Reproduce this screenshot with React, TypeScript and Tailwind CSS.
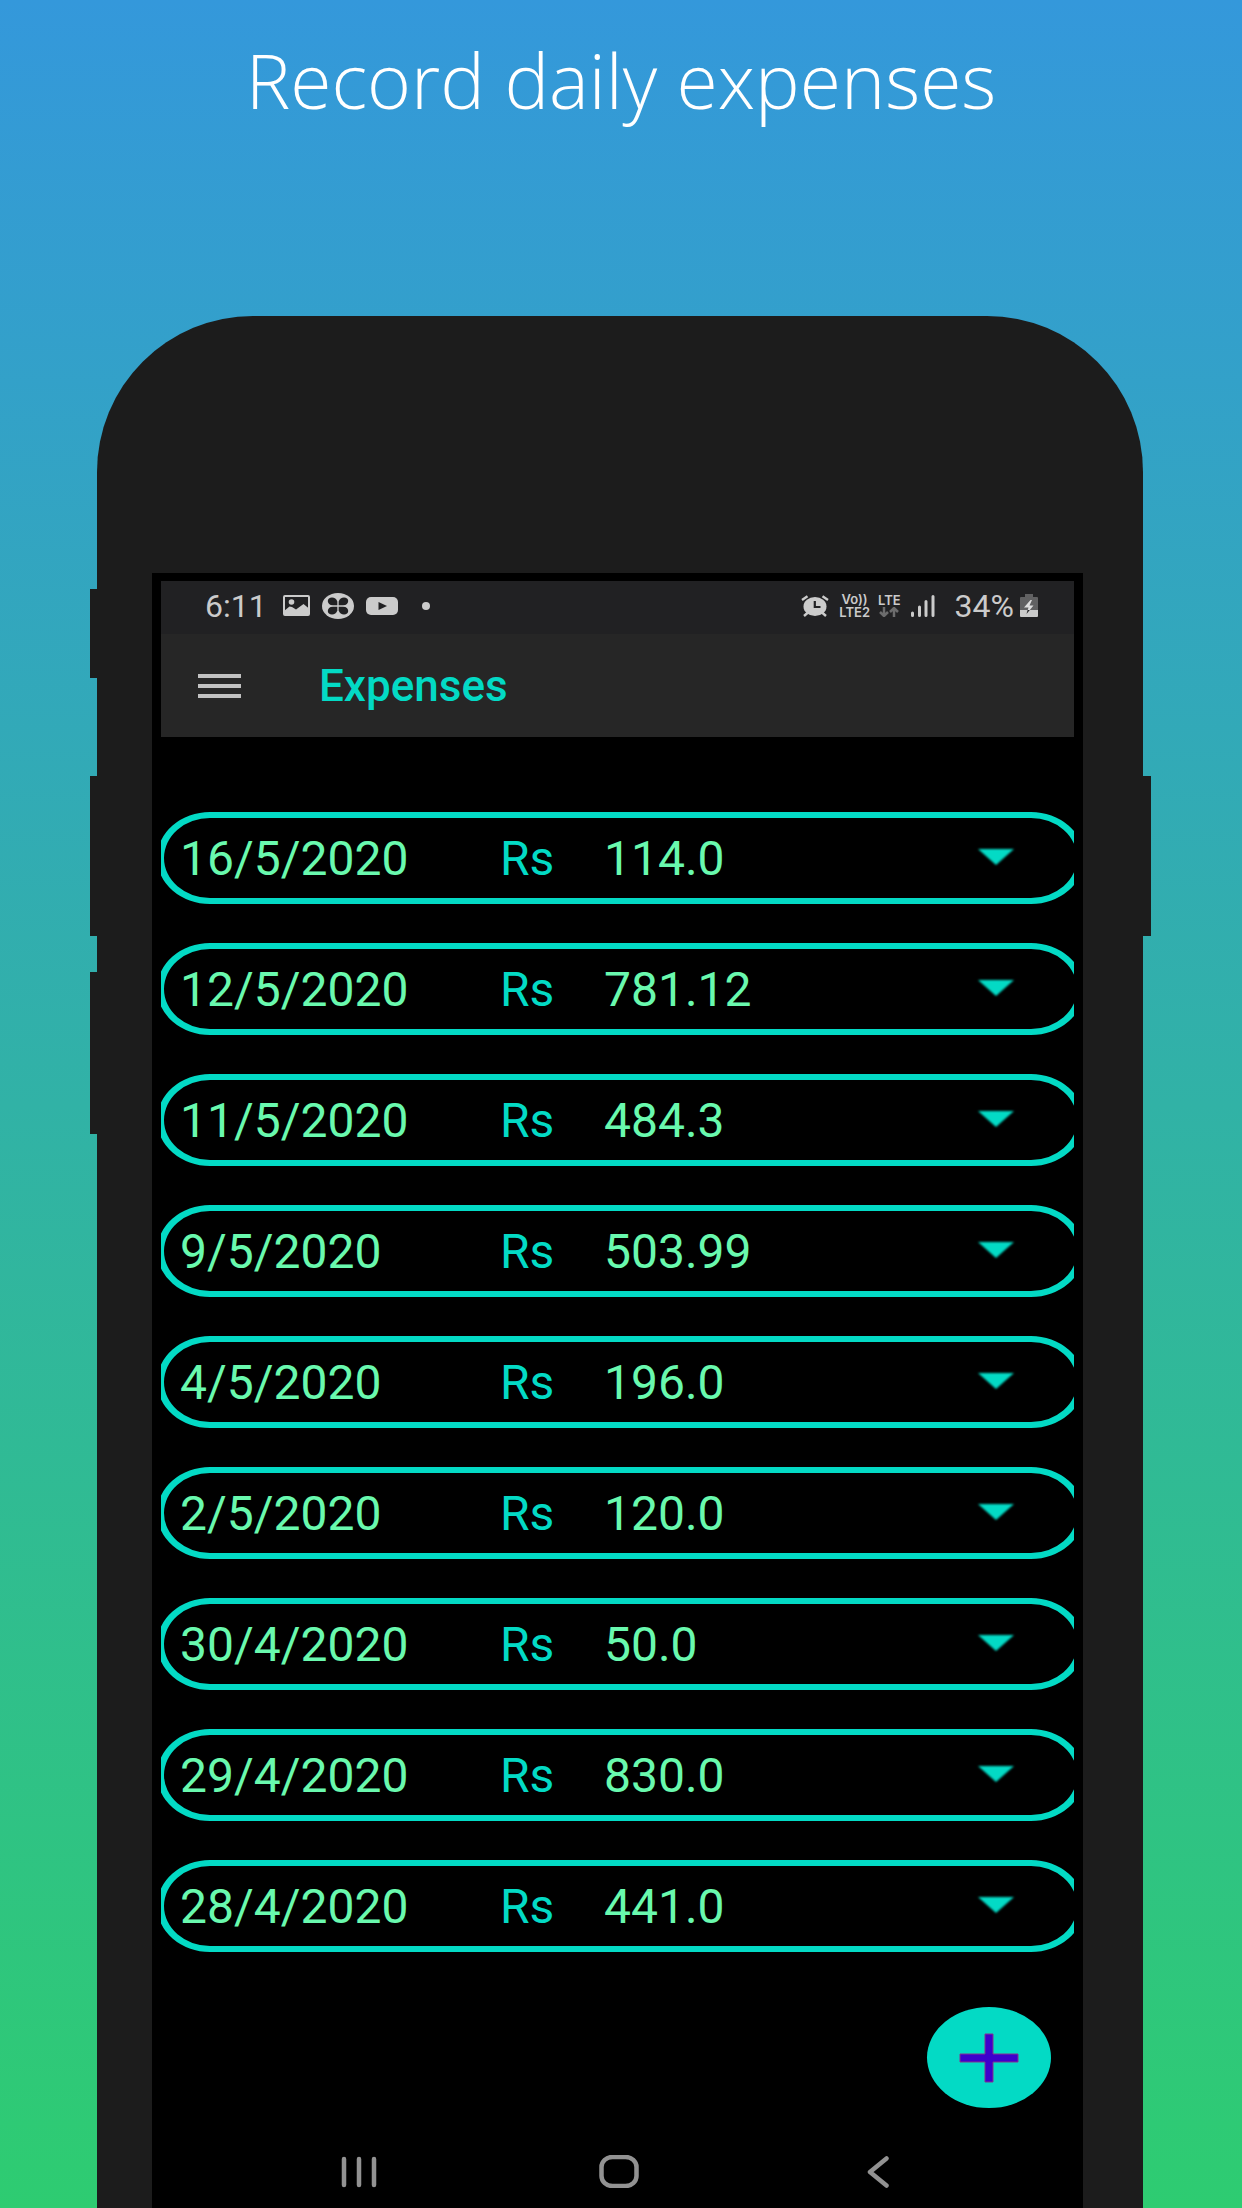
import React from "react";

type Expense = { date: string; amount: string };

const expenses: Expense[] = [
  { date: "16/5/2020", amount: "114.0" },
  { date: "12/5/2020", amount: "781.12" },
  { date: "11/5/2020", amount: "484.3" },
  { date: "9/5/2020", amount: "503.99" },
  { date: "4/5/2020", amount: "196.0" },
  { date: "2/5/2020", amount: "120.0" },
  { date: "30/4/2020", amount: "50.0" },
  { date: "29/4/2020", amount: "830.0" },
  { date: "28/4/2020", amount: "441.0" },
];

function PictureIcon() {
  return (
    <svg width="27" height="21" viewBox="0 0 27 21" aria-hidden="true">
      <rect x="1" y="1" width="25" height="19" rx="1" fill="none" stroke="#cbcbcb" strokeWidth="2" />
      <circle cx="8.500" cy="7" r="2.800" fill="#cbcbcb" />
      <path d="M1 16 6.500 11.500 9 12 13 14.500 20.500 9 26 13.500V20H1Z" fill="#cbcbcb" />
    </svg>
  );
}

function CloverIcon() {
  return (
    <svg width="32" height="26" viewBox="0 0 32 26" aria-hidden="true">
      <ellipse cx="16" cy="13" rx="16" ry="13" fill="#cbcbcb" />
      <g fill="#212123">
        <path d="M15.300 12.300V8.500C14.500 6 12.500 4.500 10 4.500 7.500 4.500 5.800 6 5.800 8 5.800 10.200 7.500 12.300 11 12.300Z" />
        <path d="M16.700 12.300V8.500C17.500 6 19.500 4.500 22 4.500 24.500 4.500 26.200 6 26.200 8 26.200 10.200 24.500 12.300 21 12.300Z" />
        <path d="M15.300 13.700V17.500C14.500 20 12.500 21.500 10 21.500 7.500 21.500 5.800 20 5.800 18 5.800 15.800 7.500 13.700 11 13.700Z" />
        <path d="M16.700 13.700V17.500C17.500 20 19.500 21.500 22 21.500 24.500 21.500 26.200 20 26.200 18 26.200 15.800 24.500 13.700 21 13.700Z" />
      </g>
    </svg>
  );
}

function VideoIcon() {
  return (
    <svg width="32" height="18" viewBox="0 0 32 18" aria-hidden="true">
      <rect width="32" height="18" rx="5" fill="#cbcbcb" />
      <path d="M12.500 5 21 9 12.500 13Z" fill="#212123" />
    </svg>
  );
}

function AlarmIcon() {
  return (
    <svg width="28" height="22" viewBox="0 0 28 22" aria-hidden="true">
      <g stroke="#cbcbcb" strokeWidth="2.400" fill="none">
        <path d="M1 5 6.500 1.200M27 5 21.500 1.200M3 21 7 17.500M25 21 21 17.500" />
      </g>
      <ellipse cx="14" cy="11.500" rx="11.500" ry="9.500" fill="#cbcbcb" />
      <path d="M13.800 6V12H19.500" stroke="#212123" strokeWidth="2.200" fill="none" />
    </svg>
  );
}

function DataArrowsIcon() {
  return (
    <svg width="20" height="10" viewBox="0 0 20 10" aria-hidden="true">
      <path d="M5 0V8M1 5 5 9 9 5M15 10V2M11 5 15 1 19 5" stroke="#6c6c6d" strokeWidth="2.500" fill="none" />
    </svg>
  );
}

function SignalIcon() {
  return (
    <svg width="24" height="22" viewBox="0 0 24 22" aria-hidden="true">
      <path d="M1.500 18V20.500M8.500 12V20.500M15 6.500V20.500M22 1.500V20.500" stroke="#cbcbcb" strokeWidth="3" strokeLinecap="round" />
    </svg>
  );
}

function BatteryIcon() {
  return (
    <svg width="18" height="23" viewBox="0 0 18 23" aria-hidden="true">
      <path d="M5 0H13V3H17Q18 3 18 4V16H0V4Q0 3 1 3H5Z" fill="#616162" />
      <path d="M0 16H18V22Q18 23 17 23H1Q0 23 0 22Z" fill="#cbcbcb" />
      <path d="M10.500 6 4 13.500H8.500L6.500 20 13.500 11.500H9.500L12 6Z" fill="#dedede" />
      <path d="M7.600 16H9.800L6.500 20Z" fill="#212123" />
    </svg>
  );
}

function StatusBar() {
  return (
    <div className="flex h-[53px] items-center justify-between bg-[#212123] pb-1 pl-11 pr-9 text-[#cbcbcb]">
      <div className="flex items-center">
        <span className="w-[78px] text-[32px] leading-9">6:11</span>
        <div className="flex items-center gap-3">
          <PictureIcon />
          <CloverIcon />
          <VideoIcon />
          <span className="ml-3 h-2 w-2 rounded-full bg-[#cbcbcb]" />
        </div>
      </div>
      <div className="flex items-center">
        <AlarmIcon />
        <div className="ml-2.5 flex flex-col items-center font-['Inter',sans-serif] text-[13px] font-semibold leading-[13px]">
          <span>Vo))</span>
          <span>LTE2</span>
        </div>
        <div className="ml-2 flex flex-col items-center font-['Inter',sans-serif] text-[13px] font-semibold leading-[13px]">
          <span>LTE</span>
          <DataArrowsIcon />
        </div>
        <div className="ml-2.5">
          <SignalIcon />
        </div>
        <span className="ml-5 text-[32px] leading-9">34%</span>
        <div className="ml-1.5">
          <BatteryIcon />
        </div>
      </div>
    </div>
  );
}

function AppBar() {
  return (
    <header className="flex h-[103px] items-center bg-[#262626] pl-[37px]">
      <button type="button" aria-label="Open menu" className="flex w-[43px] flex-col gap-1.5">
        <span className="h-1 w-full bg-[#c1c1c1]" />
        <span className="h-1 w-full bg-[#c1c1c1]" />
        <span className="h-1 w-full bg-[#c1c1c1]" />
      </button>
      <h2 className="ml-[78px] text-[44px] font-medium leading-[48px] text-[#03dac5]">Expenses</h2>
    </header>
  );
}

function ExpenseRow({ date, amount }: Expense) {
  return (
    <li>
      <button
        type="button"
        className="grid h-[92px] w-full grid-cols-[320px_104px_1fr_auto] items-center rounded-[53px/46px] border-6 border-x-7 border-[#03dac5] pl-4 pr-[63px] text-left text-[48px] leading-[56px] text-[#69f9ae]"
      >
        <span className="pt-0.5">{date}</span>
        <span className="pt-0.5 text-[#03dac5]">Rs</span>
        <span className="pt-0.5">{amount}</span>
        <svg width="36" height="20" viewBox="0 0 36 20" className="overflow-visible blur-[1px]" aria-hidden="true">
          <path d="M0 1H36L18 17Z" fill="#03dac5" />
        </svg>
      </button>
    </li>
  );
}

function NavBar() {
  return (
    <nav className="flex items-center justify-between pl-[178px] pr-[176px]">
      <button type="button" aria-label="Recent apps" className="flex w-10 justify-center">
        <svg width="36" height="32" viewBox="0 0 36 32">
          <path d="M3 3V29M18 3V29M33 3V29" stroke="#929292" strokeWidth="4.500" strokeLinecap="round" />
        </svg>
      </button>
      <button type="button" aria-label="Home" className="flex w-10 justify-center">
        <svg width="40" height="33" viewBox="0 0 40 33">
          <rect x="2.500" y="2" width="35" height="29" rx="11" ry="10" fill="none" stroke="#929292" strokeWidth="4.500" />
        </svg>
      </button>
      <button type="button" aria-label="Back" className="flex w-10 justify-center">
        <svg width="22" height="32" viewBox="0 0 22 32">
          <path d="M19.500 2.500 3 16 19.500 29.500" fill="none" stroke="#929292" strokeWidth="4.500" strokeLinecap="round" strokeLinejoin="round" />
        </svg>
      </button>
    </nav>
  );
}

export default function App() {
  return (
    <main className="flex min-h-screen flex-col overflow-hidden bg-linear-to-b/srgb from-[#3498db] to-[#2ecc71] font-['Roboto',sans-serif]">
      <h1 className="pt-7 text-center font-['Open_Sans',sans-serif] text-[75px] font-light leading-[104px] text-white">
        Record daily expenses
      </h1>
      <div className="relative mt-[184px] ml-[97px] mr-[99px] flex grow flex-col rounded-t-[156px] bg-[#1c1c1c] pl-[55px] pr-[60px] pt-[257px]">
        <span className="absolute -left-[7px] top-[273px] h-[89px] w-2 bg-[#1c1c1c]" />
        <span className="absolute -left-[7px] top-[460px] h-[160px] w-2 bg-[#1c1c1c]" />
        <span className="absolute -left-[7px] top-[656px] h-[162px] w-2 bg-[#1c1c1c]" />
        <span className="absolute -right-[8px] top-[460px] h-[160px] w-[9px] bg-[#1c1c1c]" />
        <div className="flex grow flex-col bg-black px-[9px] pt-2">
          <StatusBar />
          <AppBar />
          <section className="relative overflow-hidden pt-[75px]">
            <ul className="-ml-1 -mr-2.5 flex flex-col gap-[39px]">
              {expenses.map((e) => (
                <ExpenseRow key={e.date} {...e} />
              ))}
            </ul>
          </section>
          <button
            type="button"
            aria-label="Add expense"
            className="mr-[23px] mt-[55px] flex h-[101px] w-[124px] items-center justify-center self-end rounded-[50%] bg-[#03dac5]"
          >
            <svg width="60" height="50" viewBox="0 0 60 50">
              <path d="M26 1H34V21H59V29H34V49H26V29H1V21H26Z" fill="#3d00cc" stroke="#85308f" strokeWidth="1" />
            </svg>
          </button>
          <div className="mt-[47px] pb-[19px]">
            <NavBar />
          </div>
        </div>
      </div>
    </main>
  );
}
